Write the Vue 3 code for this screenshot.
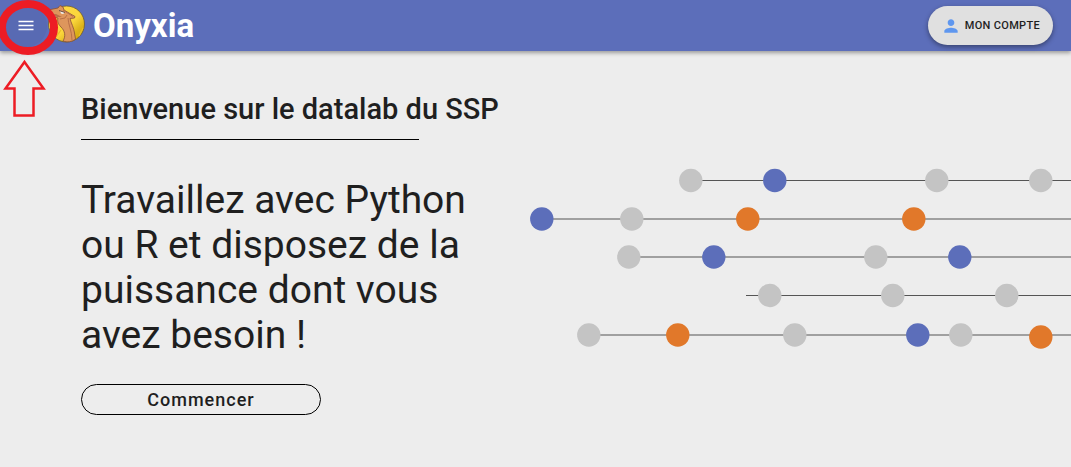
<script setup>
const tracks = [
  { y: 30.5, from: 160, stroke: '#555', width: 1, dots: [[160, 'idle'], [244, 'blue'], [406, 'idle'], [510, 'idle']] },
  { y: 69, from: 11, stroke: '#a0a0a0', width: 2, dots: [[11, 'blue'], [101, 'idle'], [217, 'orange'], [383, 'orange']] },
  { y: 107, from: 98, stroke: '#a0a0a0', width: 2, dots: [[98, 'idle'], [183, 'blue'], [345, 'idle'], [429, 'blue']] },
  { y: 145.5, from: 216, stroke: '#555', width: 1, dots: [[239, 'idle'], [362, 'idle'], [476, 'idle']] },
  { y: 185, from: 58, stroke: '#a0a0a0', width: 2, dots: [[58, 'idle'], [147, 'orange'], [264, 'idle'], [387, 'blue'], [430, 'idle'], [510, 'orange', 2]] },
]
</script>

<template>
  <div class="page">
    <header class="bar">
      <button class="menu" type="button" aria-label="Menu">
        <svg width="20" height="20" viewBox="0 0 20 20" aria-hidden="true">
          <path d="M2.5 5.5h15M2.5 9.5h15M2.5 13.5h15" stroke="#fff" stroke-width="1.5" />
        </svg>
      </button>
      <a class="brand" href="#">
        <svg class="logo" width="38" height="38" viewBox="0 0 38 38" aria-hidden="true">
          <defs>
            <linearGradient id="coin" x1="0" y1="0" x2="1" y2="1">
              <stop offset="0" stop-color="#ffdc45" />
              <stop offset=".55" stop-color="#fbd63c" />
              <stop offset=".75" stop-color="#dcb31a" />
              <stop offset="1" stop-color="#d1a000" />
            </linearGradient>
          </defs>
          <circle cx="19.5" cy="19" r="18" fill="url(#coin)" stroke="#6b5b31" stroke-width=".8" />
          <path d="M5 27L11 19M9 32L14 25M32 31L36 23" stroke="#e9bd25" stroke-width="1.2" />
          <path d="M1 5L6 4L11 3L13 .5L16 2L17 5L22 8L28 11.5L27.5 13L23 13.5C24 18 27 23 27.5 28L28.5 34C25 37 20 37.5 16 36C19 31 18 26 14 22C11 19 10 16 11 13L7 12L2 10Z" fill="#de965c" stroke="#895036" stroke-width=".8" stroke-linejoin="round" />
          <path d="M16 5L26 11.5M21 13C21 19 25 26 25 35M13 14L18 13L20 10" fill="none" stroke="#b96f48" stroke-width="1" />
          <path d="M4 9L9 9L15 12L10 12Z" fill="#b96f48" />
          <path d="M13 6L18 7.5L16 9L14 8.5Z" fill="#f4f2ed" />
          <path d="M12 5.5L18 7.5" stroke="#5b443d" stroke-width=".9" />
        </svg>
        <span class="name">Onyxia</span>
      </a>
      <button class="account" type="button">
        <svg width="20" height="20" viewBox="0 0 24 24" fill="#5f97ef" aria-hidden="true">
          <path d="M12 12c2.21 0 4-1.79 4-4s-1.79-4-4-4-4 1.79-4 4 1.79 4 4 4zm0 2c-2.67 0-8 1.34-8 4v2h16v-2c0-2.66-5.33-4-8-4z" />
        </svg>
        MON COMPTE
      </button>
    </header>

    <main class="hero">
      <section class="intro">
        <h1>Bienvenue sur le datalab du SSP</h1>
        <hr>
        <p>Travaillez avec Python ou R et disposez de la puissance dont vous avez besoin !</p>
        <button class="start" type="button">Commencer</button>
      </section>
      <svg class="tracks" viewBox="0 0 541 210" aria-hidden="true">
        <g v-for="track in tracks" :key="track.y">
          <line :x1="track.from" x2="541" :y1="track.y" :y2="track.y" :stroke="track.stroke" :stroke-width="track.width" />
          <circle
            v-for="[x, tone, drop = 0] in track.dots"
            :key="x"
            :cx="x + 0.8"
            :cy="track.y + drop"
            r="11.7"
            :class="tone"
          />
        </g>
      </svg>
    </main>

    <svg class="marker" width="60" height="120" viewBox="0 0 60 120" aria-hidden="true">
      <ellipse cx="28" cy="27.5" rx="26" ry="23.5" stroke-width="8" />
      <path d="M24.5 62L43.5 88.5H33.5V115.5H14.5V88.5H5.5Z" stroke-width="2.5" />
    </svg>
  </div>
</template>

<style>
body {
  margin: 0;
  background: #ededed;
}
</style>

<style scoped>
.page {
  position: relative;
  min-height: 100vh;
  overflow: hidden;
  background: #ededed;
  color: #1f1f1f;
  font-family: Roboto, "Liberation Sans", sans-serif;
}

button {
  border: 0;
  font: inherit;
  color: inherit;
  cursor: pointer;
}

.bar {
  display: flex;
  align-items: center;
  height: 51px;
  padding: 0 18px 0 5px;
  box-sizing: border-box;
  background: #5c6eba;
  box-shadow: 0 2px 4px rgba(0, 0, 0, 0.35);
}

.menu {
  display: grid;
  place-items: center;
  width: 42px;
  height: 42px;
  padding: 0;
  border-radius: 50%;
  background: #586ab3;
}

.brand {
  display: flex;
  align-items: center;
  gap: 8px;
  color: #fff;
  text-decoration: none;
}

.logo {
  margin-bottom: 4px;
}

.name {
  font-size: 33px;
  line-height: 40px;
  font-weight: 700;
}

.account {
  display: flex;
  align-items: center;
  gap: 4px;
  height: 39px;
  margin-left: auto;
  padding: 0 13px;
  border-radius: 20px;
  background: #e0e0e0;
  box-shadow: 0 2px 5px rgba(0, 0, 0, 0.4);
  font-size: 11px;
  font-weight: 500;
  letter-spacing: 0.02857em;
}

.hero {
  display: grid;
  grid-template-columns: 414px minmax(0, 1fr);
  column-gap: 35px;
  align-items: start;
  padding: 38px 0 52px 81px;
}

.intro h1 {
  margin: 0;
  font-size: 29px;
  line-height: 40px;
  font-weight: 500;
  white-space: nowrap;
}

.intro hr {
  width: 338px;
  height: 1px;
  margin: 10px 0 38px;
  border: 0;
  background: #000;
}

.intro p {
  max-width: 400px;
  margin: 0 0 26px;
  font-size: 39px;
  line-height: 45px;
}

.start {
  width: 240px;
  height: 31px;
  padding: 0;
  border: 1px solid #000;
  border-radius: 16px;
  background: transparent;
  font-size: 18px;
  font-weight: 500;
  letter-spacing: 1px;
}

.tracks {
  width: 100%;
  height: auto;
  margin-top: 61px;
}

.idle {
  fill: #c4c4c4;
}

.blue {
  fill: #5c6eba;
}

.orange {
  fill: #e1782a;
}

.marker {
  position: absolute;
  top: 0;
  left: 0;
  fill: none;
  stroke: #ed1c24;
  pointer-events: none;
}
</style>
